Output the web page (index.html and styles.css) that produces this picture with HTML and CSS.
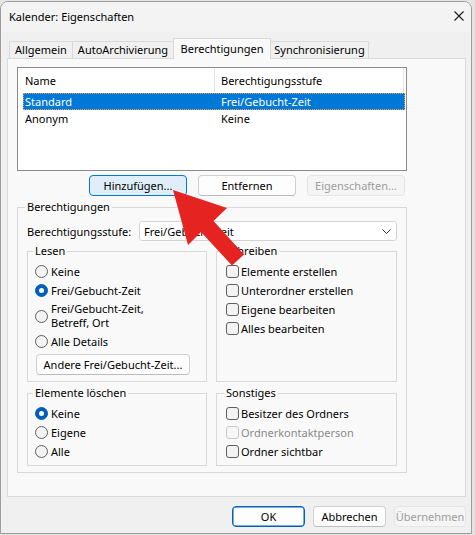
FILE: index.html
```html
<!DOCTYPE html>
<html lang="de">
<head>
<meta charset="utf-8">
<title>Kalender: Eigenschaften</title>
<link rel="stylesheet" href="styles.css">
</head>
<body>
<div class="window">
  <div class="titlebar">
    <span class="title">Kalender: Eigenschaften</span>
    <svg class="close" width="10" height="10" viewBox="0 0 10 10"><path d="M0.5 0.5 L9.5 9.5 M9.5 0.5 L0.5 9.5" stroke="#1a1a1a" stroke-width="1.1" fill="none"/></svg>
  </div>
  <div class="content">
    <div class="tabs">
      <div class="tab t1">Allgemein</div>
      <div class="tab t2">AutoArchivierung</div>
      <div class="tab t3 active">Berechtigungen</div>
      <div class="tab t4">Synchronisierung</div>
    </div>
    <div class="panel">
      <div class="col">
        <div class="listview">
          <div class="lv-head">
            <div class="h1">Name</div>
            <div class="h2">Berechtigungsstufe</div>
          </div>
          <div class="lv-row sel"><span class="r1">Standard</span><span class="r2">Frei/Gebucht-Zeit</span></div>
          <div class="lv-row"><span class="r1">Anonym</span><span class="r2">Keine</span></div>
        </div>
        <div class="btnrow">
          <div class="btn hover w98">Hinzufügen...</div>
          <div class="btn w98">Entfernen</div>
          <div class="btn disabled w98">Eigenschaften...</div>
        </div>
        <fieldset class="group outer">
          <legend>Berechtigungen</legend>
          <div class="levelrow">
            <span class="lvl-label">Berechtigungsstufe:</span>
            <div class="combo">
              <span>Frei/Gebucht-Zeit</span>
              <svg width="9" height="5" viewBox="0 0 9 5"><path d="M0.5 0.5 L4.5 4.5 L8.5 0.5" stroke="#333" stroke-width="1" fill="none"/></svg>
            </div>
          </div>
          <div class="grid">
            <fieldset class="group sub radios">
              <legend>Lesen</legend>
              <div class="opt"><span class="radio"></span>Keine</div>
              <div class="opt"><span class="radio on"></span>Frei/Gebucht-Zeit</div>
              <div class="opt two"><span class="radio"></span><span class="twotext">Frei/Gebucht-Zeit,<br>Betreff, Ort</span></div>
              <div class="opt"><span class="radio"></span>Alle Details</div>
              <div class="btn other">Andere Frei/Gebucht-Zeit...</div>
            </fieldset>
            <fieldset class="group sub checks">
              <legend>Schreiben</legend>
              <div class="opt"><span class="check"></span>Elemente erstellen</div>
              <div class="opt"><span class="check"></span>Unterordner erstellen</div>
              <div class="opt"><span class="check"></span>Eigene bearbeiten</div>
              <div class="opt"><span class="check"></span>Alles bearbeiten</div>
            </fieldset>
            <fieldset class="group sub radios low">
              <legend>Elemente löschen</legend>
              <div class="opt"><span class="radio on"></span>Keine</div>
              <div class="opt"><span class="radio"></span>Eigene</div>
              <div class="opt"><span class="radio"></span>Alle</div>
            </fieldset>
            <fieldset class="group sub checks low">
              <legend>Sonstiges</legend>
              <div class="opt"><span class="check"></span>Besitzer des Ordners</div>
              <div class="opt dis"><span class="check"></span>Ordnerkontaktperson</div>
              <div class="opt"><span class="check"></span>Ordner sichtbar</div>
            </fieldset>
          </div>
        </fieldset>
      </div>
    </div>
    <div class="footer">
      <div class="btn default w73">OK</div>
      <div class="btn w73">Abbrechen</div>
      <div class="btn disabled w72">Übernehmen</div>
    </div>
  </div>
</div>
<svg class="arrow" width="475" height="535" viewBox="0 0 475 535">
  <polygon points="173,190 227,208 213.5,221 244,254.5 232,265.5 201,232 188,245" fill="#e52320"/>
</svg>
</body>
</html>
```
FILE: styles.css
```css
* { box-sizing: border-box; }
html, body { margin: 0; padding: 0; }
body {
  width: 475px;
  height: 535px;
  overflow: hidden;
  background: #e4e4e4;
  font-family: "Noto Sans", "Segoe UI", sans-serif;
  font-size: 11px;
  color: #000;
  position: relative;
}
.window {
  width: 472px;
  height: 533px;
  margin-top: 1px;
  border: 1px solid #9c9c9c;
  border-radius: 8px 8px 0 0;
  background: #f0f0f0;
  display: flex;
  flex-direction: column;
  overflow: hidden;
}
.titlebar {
  height: 30px;
  flex: none;
  display: flex;
  align-items: center;
  padding-left: 8px;
  background: #f3f3f3;
}
.title { line-height: 16px; margin-top: 0; }
.close { margin-left: auto; margin-right: 7px; align-self: flex-start; margin-top: 9px; }
.content {
  padding: 6px 5px 0 6px;
  display: flex;
  flex-direction: column;
}
.tabs {
  display: flex;
  align-items: flex-end;
  height: 20px;
  padding-left: 2px;
}
.tab {
  height: 17px;
  border: 1px solid #d9d9d9;
  border-bottom: 0;
  background: #f0f0f0;
  text-align: center;
  line-height: 15px;
  margin-left: -1px;
  white-space: nowrap;
}
.t1 { width: 64px; margin-left: 0; }
.t2 { width: 102px; }
.t3 { width: 98px; }
.t4 { width: 99px; }
.tab.active {
  height: 21px;
  margin-bottom: -1px;
  background: #f9f9f9;
  position: relative;
  z-index: 1;
  line-height: 19px;
}
.panel {
  height: 439px;
  border: 1px solid #d9d9d9;
  background: #f9f9f9;
  padding: 8px 0 0 9px;
}
.col {
  width: 390px;
  display: flex;
  flex-direction: column;
}
.listview {
  height: 104px;
  border: 1px solid #8a8a8a;
  background: #fff;
}
.lv-head {
  display: flex;
  height: 25px;
  line-height: 25px;
}
.h1 { width: 197px; border-right: 1px solid #e5e5e5; padding-left: 7px; }
.h2 { width: 189px; border-right: 1px solid #e5e5e5; padding-left: 6px; }
.lv-row {
  display: flex;
  height: 17px;
  line-height: 15px;
  margin: 0 1px 0 5px;
  border: 1px solid transparent;
}
.lv-row.sel {
  background: #0078d7;
  color: #fff;
  border: 1px dotted #f0a04a;
}
.r1 { width: 197px; padding-left: 1px; }
.r2 { padding-left: 0; }
.btnrow {
  display: flex;
  justify-content: flex-end;
  gap: 11px;
  margin-top: 4px;
  padding-right: 2px;
}
.btn {
  height: 21px;
  border: 1px solid #d0d0d0;
  border-bottom-color: #bdbdbd;
  border-radius: 4px;
  background: #fdfdfd;
  display: flex;
  align-items: center;
  justify-content: center;
  white-space: nowrap;
  line-height: 16px;
}
.btn.hover { background: #e0eef9; border-color: #0078d4; }
.btn.disabled { background: #f5f5f5; border-color: #e5e5e5; color: #9d9d9d; }
.btn.default { border-color: #005fb8; box-shadow: inset 0 0 0 0.5px #005fb8; }
.w98 { width: 98px; }
.w73 { width: 73px; }
.w72 { width: 72px; }
.group {
  margin: 0;
  border: 1px solid #d9d9d9;
  min-width: 0;
}
.group legend {
  line-height: 16px;
  padding: 0 2px;
  margin-left: -2px;
}
.outer {
  margin-top: 3px;
  padding: 6px 8px 6px 9px;
}
.levelrow {
  display: flex;
  align-items: center;
  height: 20px;
}
.lvl-label { width: 112px; }
.combo {
  width: 258px;
  height: 20px;
  border: 1px solid #d3d3d3;
  border-radius: 3px;
  background: #fff;
  display: flex;
  align-items: center;
  justify-content: space-between;
  padding: 0 5px 0 4px;
}
.grid {
  display: grid;
  grid-template-columns: 180px 181px;
  column-gap: 9px;
  row-gap: 3px;
  margin-top: 2px;
}
.sub { padding: 3px 6px 6px 7px; }
.sub.checks { padding-left: 9px; }
.sub.low { padding-bottom: 4px; }
.opt {
  display: flex;
  align-items: center;
  height: 19px;
  white-space: nowrap;
}
.opt.two { height: 32px; }
.twotext { line-height: 14px; }
.opt.dis { color: #8a8a8a; }
.radio {
  width: 13px;
  height: 13px;
  flex: none;
  border: 1px solid #5f5f5f;
  border-radius: 50%;
  background: #f3f3f3;
  margin-right: 3px;
  display: flex;
  align-items: center;
  justify-content: center;
}
.radio.on { background: #005fb8; border-color: #005fb8; }
.radio.on::after {
  content: "";
  width: 5px;
  height: 5px;
  border-radius: 50%;
  background: #fff;
}
.check {
  width: 13px;
  height: 13px;
  flex: none;
  border: 1px solid #5f5f5f;
  border-radius: 3px;
  background: #f3f3f3;
  margin-right: 2px;
}
.opt.dis .check { border-color: #c9c9c9; background: #f7f7f7; }
.btn.other {
  width: 154px;
  margin: 3px 0 0 1px;
}
.footer {
  display: flex;
  justify-content: flex-end;
  gap: 8px;
  margin-top: 9px;
  margin-right: 0;
}
.arrow {
  position: absolute;
  left: 0;
  top: 0;
  pointer-events: none;
}
```
